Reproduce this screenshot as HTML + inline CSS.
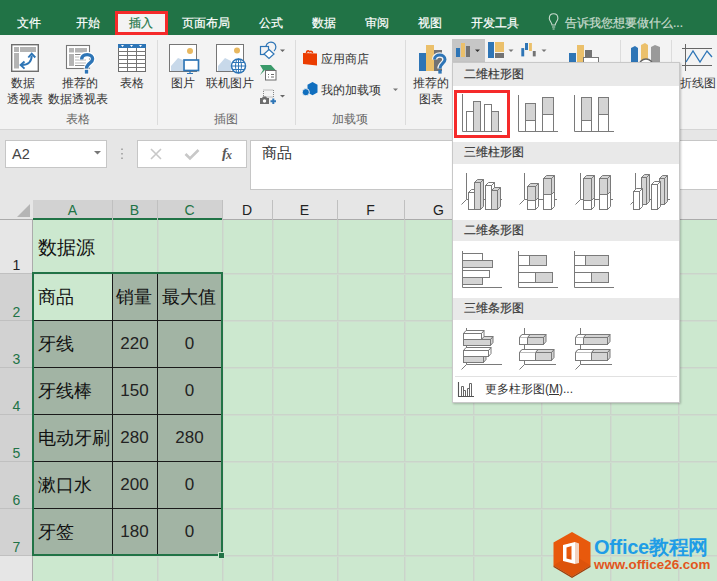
<!DOCTYPE html>
<html><head><meta charset="utf-8"><style>
*{margin:0;padding:0;box-sizing:border-box}
html,body{width:717px;height:581px;overflow:hidden;background:#cce8cf;font-family:"Liberation Sans",sans-serif;font-size:12px;color:#262626;position:relative}
.a{position:absolute;white-space:nowrap}
.tab{position:absolute;top:15px;color:#fff;font-size:12px;line-height:16px;white-space:nowrap;-webkit-text-stroke:0.2px currentColor}
.rl{position:absolute;font-size:12px;line-height:15px;color:#333;white-space:nowrap}
.gl{position:absolute;top:112px;font-size:12px;line-height:15px;color:#666;white-space:nowrap}
.hd{position:absolute;left:453px;width:226px;background:#e9e9e9}
.hdt{position:absolute;left:11px;font-size:12px;line-height:15px;color:#3a3a3a;white-space:nowrap;-webkit-text-stroke:0.2px #3a3a3a}
.ch{position:absolute;top:200px;height:20px;font-size:14px;line-height:21px;text-align:center;color:#222}
.rh{position:absolute;left:0;width:33px;font-size:14px;line-height:14px;text-align:center;color:#222}
.ct{position:absolute;font-size:19.2px;line-height:22px;color:#111;white-space:nowrap}
.cn{position:absolute;font-size:17px;line-height:22px;color:#222;text-align:center}
</style></head><body>
<div class="a" style="left:0;top:0;width:717px;height:35px;background:#217346"></div>
<div class="tab" style="left:17px">文件</div>
<div class="tab" style="left:76px">开始</div>
<div class="tab" style="left:182px">页面布局</div>
<div class="tab" style="left:259px">公式</div>
<div class="tab" style="left:312px">数据</div>
<div class="tab" style="left:365px">审阅</div>
<div class="tab" style="left:418px">视图</div>
<div class="tab" style="left:471px">开发工具</div>
<div class="a" style="left:115px;top:11px;width:53px;height:24px;background:#f3f3f3;border:3px solid #f52a2a"></div>
<div class="tab" style="left:129px;color:#217346">插入</div>
<div class="tab" style="left:565px;color:#c9dccf">告诉我您想要做什么...</div>
<div class="a" style="left:0;top:35px;width:717px;height:95px;background:#f3f3f3;border-bottom:1px solid #d5d5d5"></div>
<div class="a" style="left:0;top:130px;width:717px;height:70px;background:#e6e6e6"></div>
<div class="rl" style="left:11px;top:76px">数据</div>
<div class="rl" style="left:7px;top:92px">透视表</div>
<div class="rl" style="left:62px;top:76px">推荐的</div>
<div class="rl" style="left:48px;top:92px">数据透视表</div>
<div class="rl" style="left:120px;top:76px">表格</div>
<div class="rl" style="left:171px;top:76px">图片</div>
<div class="rl" style="left:206px;top:76px">联机图片</div>
<div class="rl" style="left:321px;top:52px">应用商店</div>
<div class="rl" style="left:321px;top:83px">我的加载项</div>
<div class="rl" style="left:413px;top:76px">推荐的</div>
<div class="rl" style="left:419px;top:92px">图表</div>
<div class="rl" style="left:680px;top:76px">折线图</div>
<div class="gl" style="left:66px">表格</div>
<div class="gl" style="left:214px">插图</div>
<div class="gl" style="left:332px">加载项</div>
<div class="a" style="left:157px;top:40px;width:1px;height:85px;background:#dcdcdc"></div>
<div class="a" style="left:295px;top:40px;width:1px;height:85px;background:#dcdcdc"></div>
<div class="a" style="left:405px;top:40px;width:1px;height:85px;background:#dcdcdc"></div>
<div class="a" style="left:620px;top:40px;width:1px;height:85px;background:#dcdcdc"></div>
<div class="a" style="left:671px;top:40px;width:1px;height:85px;background:#dcdcdc"></div>
<div class="a" style="left:452px;top:39px;width:33px;height:23px;background:#c6c6c6"></div>
<div class="a" style="left:5px;top:140px;width:102px;height:28px;background:#fff;border:1px solid #c6c6c6"></div>
<div class="a" style="left:12px;top:146px;font-size:14.5px;line-height:16px;color:#444">A2</div>
<div class="a" style="left:137px;top:140px;width:110px;height:28px;background:#fff;border:1px solid #c6c6c6"></div>
<div class="a" style="left:222px;top:145px;font-family:&quot;Liberation Serif&quot;,serif;font-style:italic;font-weight:bold;font-size:15px;line-height:16px;color:#5a5a5a;letter-spacing:-1px">f<span style="font-size:12px;position:relative;top:1px">x</span></div>
<div class="a" style="left:250px;top:140px;width:480px;height:50px;background:#fff;border:1px solid #c6c6c6"></div>
<div class="a" style="left:262px;top:144px;font-size:15px;line-height:18px;color:#333">商品</div>
<div class="a" style="left:112px;top:220px;width:1px;height:361px;background:#cad4ca"></div>
<div class="a" style="left:113px;top:220px;width:1px;height:361px;background:#ceddcf"></div>
<div class="a" style="left:157px;top:220px;width:1px;height:361px;background:#cad4ca"></div>
<div class="a" style="left:158px;top:220px;width:1px;height:361px;background:#ceddcf"></div>
<div class="a" style="left:222px;top:220px;width:1px;height:361px;background:#cad4ca"></div>
<div class="a" style="left:223px;top:220px;width:1px;height:361px;background:#ceddcf"></div>
<div class="a" style="left:272px;top:220px;width:1px;height:361px;background:#cad4ca"></div>
<div class="a" style="left:273px;top:220px;width:1px;height:361px;background:#ceddcf"></div>
<div class="a" style="left:337px;top:220px;width:1px;height:361px;background:#cad4ca"></div>
<div class="a" style="left:338px;top:220px;width:1px;height:361px;background:#ceddcf"></div>
<div class="a" style="left:404px;top:220px;width:1px;height:361px;background:#cad4ca"></div>
<div class="a" style="left:405px;top:220px;width:1px;height:361px;background:#ceddcf"></div>
<div class="a" style="left:473px;top:220px;width:1px;height:361px;background:#cad4ca"></div>
<div class="a" style="left:474px;top:220px;width:1px;height:361px;background:#ceddcf"></div>
<div class="a" style="left:541px;top:220px;width:1px;height:361px;background:#cad4ca"></div>
<div class="a" style="left:542px;top:220px;width:1px;height:361px;background:#ceddcf"></div>
<div class="a" style="left:610px;top:220px;width:1px;height:361px;background:#cad4ca"></div>
<div class="a" style="left:611px;top:220px;width:1px;height:361px;background:#ceddcf"></div>
<div class="a" style="left:678px;top:220px;width:1px;height:361px;background:#cad4ca"></div>
<div class="a" style="left:679px;top:220px;width:1px;height:361px;background:#ceddcf"></div>
<div class="a" style="left:746px;top:220px;width:1px;height:361px;background:#cad4ca"></div>
<div class="a" style="left:747px;top:220px;width:1px;height:361px;background:#ceddcf"></div>
<div class="a" style="left:33px;top:273px;width:700px;height:1px;background:#cad4ca"></div>
<div class="a" style="left:33px;top:274px;width:700px;height:1px;background:#ceddcf"></div>
<div class="a" style="left:33px;top:320px;width:700px;height:1px;background:#cad4ca"></div>
<div class="a" style="left:33px;top:321px;width:700px;height:1px;background:#ceddcf"></div>
<div class="a" style="left:33px;top:367px;width:700px;height:1px;background:#cad4ca"></div>
<div class="a" style="left:33px;top:368px;width:700px;height:1px;background:#ceddcf"></div>
<div class="a" style="left:33px;top:414px;width:700px;height:1px;background:#cad4ca"></div>
<div class="a" style="left:33px;top:415px;width:700px;height:1px;background:#ceddcf"></div>
<div class="a" style="left:33px;top:461px;width:700px;height:1px;background:#cad4ca"></div>
<div class="a" style="left:33px;top:462px;width:700px;height:1px;background:#ceddcf"></div>
<div class="a" style="left:33px;top:508px;width:700px;height:1px;background:#cad4ca"></div>
<div class="a" style="left:33px;top:509px;width:700px;height:1px;background:#ceddcf"></div>
<div class="a" style="left:33px;top:555px;width:700px;height:1px;background:#cad4ca"></div>
<div class="a" style="left:33px;top:556px;width:700px;height:1px;background:#ceddcf"></div>
<div class="a" style="left:33px;top:602px;width:700px;height:1px;background:#cad4ca"></div>
<div class="a" style="left:33px;top:603px;width:700px;height:1px;background:#ceddcf"></div>
<div class="a" style="left:112px;top:273px;width:110px;height:47px;background:#a2b4a4"></div>
<div class="a" style="left:33px;top:320px;width:189px;height:235px;background:#a2b4a4"></div>
<div class="a" style="left:33px;top:273px;width:1px;height:283px;background:#1a1a1a"></div>
<div class="a" style="left:112px;top:273px;width:1px;height:283px;background:#1a1a1a"></div>
<div class="a" style="left:157px;top:273px;width:1px;height:283px;background:#1a1a1a"></div>
<div class="a" style="left:221px;top:273px;width:1px;height:283px;background:#1a1a1a"></div>
<div class="a" style="left:33px;top:273px;width:189px;height:1px;background:#1a1a1a"></div>
<div class="a" style="left:33px;top:320px;width:189px;height:1px;background:#1a1a1a"></div>
<div class="a" style="left:33px;top:367px;width:189px;height:1px;background:#1a1a1a"></div>
<div class="a" style="left:33px;top:414px;width:189px;height:1px;background:#1a1a1a"></div>
<div class="a" style="left:33px;top:461px;width:189px;height:1px;background:#1a1a1a"></div>
<div class="a" style="left:33px;top:508px;width:189px;height:1px;background:#1a1a1a"></div>
<div class="a" style="left:33px;top:555px;width:189px;height:1px;background:#1a1a1a"></div>
<div class="a" style="left:0;top:200px;width:717px;height:20px;background:#e6e6e6;border-bottom:1px solid #ababab"></div>
<div class="a" style="left:33px;top:200px;width:189px;height:20px;background:#d2d2d2;border-bottom:2px solid #217346"></div>
<div class="a" style="left:112px;top:200px;width:1px;height:20px;background:#c0c0c0"></div>
<div class="a" style="left:157px;top:200px;width:1px;height:20px;background:#c0c0c0"></div>
<div class="a" style="left:222px;top:200px;width:1px;height:20px;background:#c0c0c0"></div>
<div class="a" style="left:272px;top:200px;width:1px;height:20px;background:#c0c0c0"></div>
<div class="a" style="left:337px;top:200px;width:1px;height:20px;background:#c0c0c0"></div>
<div class="a" style="left:404px;top:200px;width:1px;height:20px;background:#c0c0c0"></div>
<div class="a" style="left:473px;top:200px;width:1px;height:20px;background:#c0c0c0"></div>
<div class="a" style="left:541px;top:200px;width:1px;height:20px;background:#c0c0c0"></div>
<div class="a" style="left:610px;top:200px;width:1px;height:20px;background:#c0c0c0"></div>
<div class="a" style="left:678px;top:200px;width:1px;height:20px;background:#c0c0c0"></div>
<div class="a" style="left:746px;top:200px;width:1px;height:20px;background:#c0c0c0"></div>
<div class="ch" style="left:33px;width:79px;color:#217346">A</div>
<div class="ch" style="left:112px;width:45px;color:#217346">B</div>
<div class="ch" style="left:157px;width:65px;color:#217346">C</div>
<div class="ch" style="left:222px;width:50px;color:#222">D</div>
<div class="ch" style="left:272px;width:65px;color:#222">E</div>
<div class="ch" style="left:337px;width:67px;color:#222">F</div>
<div class="ch" style="left:404px;width:69px;color:#222">G</div>
<div class="ch" style="left:473px;width:68px;color:#222">H</div>
<div class="ch" style="left:541px;width:69px;color:#222">I</div>
<div class="ch" style="left:610px;width:68px;color:#222">J</div>
<div class="a" style="left:0;top:220px;width:33px;height:361px;background:#e6e6e6;border-right:1px solid #ababab"></div>
<div class="a" style="left:0;top:273px;width:33px;height:282px;background:#d2d2d2;border-right:1px solid #ababab"></div>
<div class="a" style="left:0;top:273px;width:33px;height:1px;background:#c0c0c0"></div>
<div class="a" style="left:0;top:320px;width:33px;height:1px;background:#c0c0c0"></div>
<div class="a" style="left:0;top:367px;width:33px;height:1px;background:#c0c0c0"></div>
<div class="a" style="left:0;top:414px;width:33px;height:1px;background:#c0c0c0"></div>
<div class="a" style="left:0;top:461px;width:33px;height:1px;background:#c0c0c0"></div>
<div class="a" style="left:0;top:508px;width:33px;height:1px;background:#c0c0c0"></div>
<div class="a" style="left:0;top:555px;width:33px;height:1px;background:#c0c0c0"></div>
<div class="a" style="left:0;top:602px;width:33px;height:1px;background:#c0c0c0"></div>
<div class="rh" style="top:258px;color:#222">1</div>
<div class="rh" style="top:305px;color:#217346">2</div>
<div class="rh" style="top:352px;color:#217346">3</div>
<div class="rh" style="top:399px;color:#217346">4</div>
<div class="rh" style="top:446px;color:#217346">5</div>
<div class="rh" style="top:493px;color:#217346">6</div>
<div class="rh" style="top:540px;color:#217346">7</div>
<div class="a" style="left:32px;top:272px;width:191px;height:284px;border:2px solid #217346"></div>
<div class="a" style="left:219px;top:553px;width:5px;height:5px;background:#217346;outline:1px solid #cce8cf"></div>
<svg class="a" style="left:0;top:200px" width="33" height="20"><path d="M30 4 L30 17 L17 17 Z" fill="#b5b5b5"/></svg>
<div class="ct" style="left:38px;top:237px">数据源</div>
<div class="ct" style="left:38px;top:286px;font-size:17.5px">商品</div>
<div class="ct" style="left:116px;top:286px;font-size:17.5px">销量</div>
<div class="ct" style="left:162px;top:286px;font-size:17.5px">最大值</div>
<div class="ct" style="left:38px;top:333px;font-size:17.5px">牙线</div>
<div class="cn" style="left:112px;width:45px;top:333px">220</div>
<div class="cn" style="left:157px;width:65px;top:333px">0</div>
<div class="ct" style="left:38px;top:380px;font-size:17.5px">牙线棒</div>
<div class="cn" style="left:112px;width:45px;top:380px">150</div>
<div class="cn" style="left:157px;width:65px;top:380px">0</div>
<div class="ct" style="left:38px;top:427px;font-size:17.5px">电动牙刷</div>
<div class="cn" style="left:112px;width:45px;top:427px">280</div>
<div class="cn" style="left:157px;width:65px;top:427px">280</div>
<div class="ct" style="left:38px;top:474px;font-size:17.5px">漱口水</div>
<div class="cn" style="left:112px;width:45px;top:474px">200</div>
<div class="cn" style="left:157px;width:65px;top:474px">0</div>
<div class="ct" style="left:38px;top:521px;font-size:17.5px">牙签</div>
<div class="cn" style="left:112px;width:45px;top:521px">180</div>
<div class="cn" style="left:157px;width:65px;top:521px">0</div>
<svg class="a" style="left:0;top:0" width="717" height="581"><rect x="11.7" y="44.7" width="26.6" height="26.6" fill="#fff" stroke="#6e6e6e" stroke-width="1.4"/><rect x="20" y="47" width="16" height="5" fill="#b4b4b4"/><rect x="14" y="47" width="5" height="5" fill="#b4b4b4"/><rect x="14" y="53" width="5" height="15.5" fill="#b4b4b4"/><path d="M31.7 55.5 C31.7 61.5 28 65 22 65" fill="none" stroke="#2e75b6" stroke-width="2"/><path d="M28.3 57.5 L31.7 53.6 L35.3 57.5" fill="none" stroke="#2e75b6" stroke-width="1.9"/><path d="M24.5 61.5 L20.6 65 L24.5 68.6" fill="none" stroke="#2e75b6" stroke-width="1.9"/><rect x="66.5" y="45.5" width="23" height="23" fill="#fff" stroke="#777" stroke-width="1.1"/><rect x="69" y="48" width="5" height="4.5" fill="#b4b4b4"/><rect x="75" y="48" width="12" height="4.5" fill="#b4b4b4"/><rect x="69" y="54" width="5" height="12" fill="#b4b4b4"/><path d="M75 54.5 H87 M75 65.5 H87" stroke="#888" stroke-width="1"/><path d="M75 57 H86 M75 60 H86 M75 63 H86" stroke="#d0d0d0" stroke-width="1.6"/><path d="M81.7 59.6 C81.7 56 84 54.6 87.2 54.6 C90.8 54.6 92.6 56.6 92.6 59 C92.6 61.8 90 62.8 88.6 64.2 C87.2 65.6 86.5 66.5 86.5 68.6" fill="none" stroke="#fff" stroke-width="5.6"/><rect x="83.8" y="68.6" width="5.4" height="6" fill="#fff"/><path d="M81.7 59.6 C81.7 56 84 54.6 87.2 54.6 C90.8 54.6 92.6 56.6 92.6 59 C92.6 61.8 90 62.8 88.6 64.2 C87.2 65.6 86.5 66.5 86.5 68.6" fill="none" stroke="#2e75b6" stroke-width="3.4"/><rect x="84.8" y="69.8" width="3.4" height="3.8" fill="#2e75b6"/><rect x="118.5" y="44.5" width="27" height="27" fill="#fff" stroke="#6d6d6d" stroke-width="1"/><rect x="118" y="44" width="28" height="4" fill="#2e75b6"/><path d="M121 45 h3 l-1.5 2z M130 45 h3 l-1.5 2z M139 45 h3 l-1.5 2z" fill="#fff"/><path d="M127.5 48 V71 M136.5 48 V71 M118 51.5 H146 M118 55.5 H146 M118 59.5 H146 M118 63.5 H146 M118 67.5 H146" stroke="#767676" stroke-width="1"/><rect x="169.5" y="44.5" width="27" height="27" fill="#fff" stroke="#767676" stroke-width="1"/><circle cx="190" cy="51" r="3" fill="#e8b860"/><path d="M171 71 V66 L178 58 L183 60 V71 Z" fill="#c8d9ea"/><rect x="184" y="60" width="14.5" height="10.5" fill="#fff" stroke="#2e75b6" stroke-width="1.7"/><path d="M190 71 V73 M187 73.5 H193" stroke="#2e75b6" stroke-width="1.2"/><rect x="216.5" y="44.5" width="27" height="27" fill="#fff" stroke="#767676" stroke-width="1"/><circle cx="237" cy="50.5" r="3" fill="#e8b860"/><path d="M218 71 V66 L225 58 L231 61 V71 Z" fill="#c8d9ea"/><circle cx="238.5" cy="66" r="7" fill="#fff" stroke="#2e75b6" stroke-width="1.5"/><path d="M231.5 66 H245.5 M232.5 62.5 H244.5 M232.5 69.5 H244.5 M238.5 59 V73" stroke="#2e75b6" stroke-width="1"/><ellipse cx="238.5" cy="66" rx="3" ry="7" fill="none" stroke="#2e75b6" stroke-width="1"/><rect x="260.5" y="46.5" width="8" height="8" fill="none" stroke="#2e75b6" stroke-width="1.2"/><path d="M266 46 A5 5 0 1 1 274 51" fill="none" stroke="#2e75b6" stroke-width="1.2"/><path d="M269 49.5 L274 54 L269 58.5 L264 54 Z" fill="#fff" stroke="#2e75b6" stroke-width="1.2"/><path d="M280 49.5 h5 l-2.5 2.5z" fill="#666"/><path d="M260 65 H271 L275.5 70 H265 L260 75 L263 70 Z" fill="#3a9a6a"/><rect x="265.5" y="70.5" width="10.5" height="9.5" fill="#fff" stroke="#6d6d6d" stroke-width="1"/><path d="M268 74.5 h1 M271 74.5 h3 M268 77 h1 M271 77 h3" stroke="#6d6d6d" stroke-width="1"/><rect x="263.5" y="90" width="10" height="7" fill="none" stroke="#888" stroke-width="1" stroke-dasharray="1,1"/><path d="M260 98 H262 L263 96.5 H266 L267 98 H269 V104 H260 Z" fill="#6d6d6d"/><circle cx="264.5" cy="101" r="1.7" fill="#fff"/><path d="M273.3 98.5 V104 M270.5 101.2 H276" stroke="#2e75b6" stroke-width="2"/><path d="M280 95 h5 l-2.5 2.5z" fill="#666"/><path d="M303 53 L317 53.5 L317 65.5 L303 64 Z" fill="#eb3c00"/><path d="M306.5 53 C306.5 50.3 309.5 50.3 309.5 52.5 C309.5 50.8 312.5 50.8 312.5 53" fill="none" stroke="#eb3c00" stroke-width="1.6"/><path d="M312.5 82 L317.5 84.8 V92.5 L312.5 95.3 L307.5 92.5 V84.8 Z" fill="#106ebe"/><circle cx="305.8" cy="92.2" r="3.6" fill="#106ebe" stroke="#f3f3f3" stroke-width="0.9"/><path d="M393 88.5 h5 l-2.5 2.5z" fill="#777"/><rect x="419" y="53" width="7" height="18" fill="#2e75b6"/><rect x="426" y="45" width="8" height="26" fill="#ebc06b"/><rect x="434" y="50" width="8" height="21" fill="#737373"/><path d="M434.5 59.5 C434.5 53.5 445 53.5 445 59.5 C445 63.5 440 63.5 440 68.5" fill="none" stroke="#f3f3f3" stroke-width="5.5"/><path d="M434.5 59.5 C434.5 53.5 445 53.5 445 59.5 C445 63.5 440 63.5 440 68.5" fill="none" stroke="#2e75b6" stroke-width="3"/><rect x="438.3" y="70" width="3.4" height="3.6" fill="#2e75b6"/><rect x="456" y="48" width="4" height="9" fill="#2e75b6"/><rect x="461" y="43" width="4" height="14" fill="#ebc06b"/><rect x="466" y="46" width="4" height="11" fill="#737373"/><path d="M475 49.5 h5 l-2.5 2.5z" fill="#333"/><rect x="488" y="42" width="6" height="16" fill="#2e75b6"/><rect x="495" y="42" width="9" height="10" fill="#ebc06b"/><rect x="495" y="53" width="9" height="5" fill="#737373"/><path d="M508.5 49.5 h5 l-2.5 2.5z" fill="#777"/><rect x="521.3" y="48.1" width="2.9" height="8.3" fill="#2e75b6"/><rect x="525" y="43" width="3" height="7" fill="#2e75b6"/><rect x="529" y="43" width="2.9" height="8" fill="#ebc06b"/><rect x="532.8" y="51" width="2.9" height="5.4" fill="#737373"/><path d="M541.5 49.5 h5 l-2.5 2.5z" fill="#777"/><rect x="569" y="53" width="7" height="10" fill="#2e75b6"/><rect x="577" y="45" width="7" height="18" fill="#ebc06b"/><rect x="585" y="50" width="7" height="13" fill="#737373"/><rect x="583.5" y="57.5" width="15" height="6" fill="#fff" stroke="#777" stroke-width="1"/><path d="M631 48 L635 46 L638 48 V63 H631 Z" fill="#2e75b6"/><path d="M641 45 L645 43 L648 45 V63 H641 Z" fill="#ebc06b"/><path d="M651 47 L655 45 L660 47 V63 H651 Z" fill="#9a9a9a"/><circle cx="646" cy="66" r="7" fill="#fff" stroke="#666" stroke-width="1.5"/><path d="M685.5 44 V71 M682 48.5 H712 M682 65.5 H712" stroke="#666" stroke-width="1"/><path d="M686 62 L693 51 L700 62 L707 51 L712 57" fill="none" stroke="#2e75b6" stroke-width="1.3"/></svg>
<svg class="a" style="left:0;top:0" width="717" height="581"><path d="M552 25 C552 22.5 549.3 21 549.3 18.5 C549.3 15.5 551.3 13.8 553.6 13.8 C555.9 13.8 557.9 15.5 557.9 18.5 C557.9 21 555.2 22.5 555.2 25 Z" fill="none" stroke="#c9dccf" stroke-width="1.1"/><path d="M552 27 H555.2 M552.6 29 H554.6" stroke="#c9dccf" stroke-width="1.1"/><path d="M94 151 h7 l-3.5 3.5z" fill="#777"/><path d="M122 148.5 v1.5 M122 153 v1.5 M122 157.5 v1.5" stroke="#999" stroke-width="1.5"/><path d="M151 149 L161 159 M161 149 L151 159" stroke="#c8c8c8" stroke-width="1.6"/><path d="M185.5 154 L190 158.5 L198.5 150" fill="none" stroke="#c8c8c8" stroke-width="2.6"/><path d="M572 532 L590.5 542.5 V565.5 L572 576.5 L553.5 565.5 V542.5 Z" fill="#e8590c"/><path d="M572 554 L590.5 565.5 L572 576.5 L553.5 565.5 Z" fill="#d24e0a" opacity="0.5"/><path d="M553.5 565.5 L572 576.5 L590.5 565.5 V567 L572 578 L553.5 567 Z" fill="#a23c08"/><path d="M563 545 L575 542 V564 L563 561 Z M566.5 547.5 V558.5 L571.5 559.8 V546 Z" fill="#fff" fill-rule="evenodd"/><path d="M575 542 L579 543.5 V563 L575 564 Z" fill="#f3d2bf"/></svg>
<div class="a" style="left:452px;top:62px;width:228px;height:341px;background:#fff;border:1px solid #c8c8c8;box-shadow:1px 1px 2px rgba(0,0,0,0.22)"></div>
<div class="hd" style="top:63px;height:23px"><div class="hdt" style="top:4px">二维柱形图</div></div>
<div class="hd" style="top:142px;height:22px"><div class="hdt" style="top:3px">三维柱形图</div></div>
<div class="hd" style="top:220px;height:21px"><div class="hdt" style="top:3px">二维条形图</div></div>
<div class="hd" style="top:298px;height:22px"><div class="hdt" style="top:3px">三维条形图</div></div>
<div class="a" style="left:455px;top:376px;width:222px;height:1px;background:#e1e1e1"></div>
<div class="a" style="left:485px;top:382px;font-size:12px;line-height:15px;color:#333">更多柱形图(<u>M</u>)...</div>
<div class="a" style="left:454px;top:90px;width:56px;height:48px;border:3px solid #f52a2a"></div>
<svg class="a" style="left:0;top:0" width="717" height="581"><path d="M462.5 94 V131.5 H502" fill="none" stroke="#7a7a7a" stroke-width="1"/><rect x="466.5" y="111.5" width="7" height="20" fill="#fff" stroke="#7a7a7a" stroke-width="1"/><rect x="473.5" y="101.5" width="7" height="30" fill="#d4d4d4" stroke="#7a7a7a" stroke-width="1"/><rect x="484.5" y="104.5" width="7" height="27" fill="#fff" stroke="#7a7a7a" stroke-width="1"/><rect x="491.5" y="111.5" width="7" height="20" fill="#d4d4d4" stroke="#7a7a7a" stroke-width="1"/><path d="M518.5 95 V131.5 H558" fill="none" stroke="#7a7a7a" stroke-width="1"/><rect x="525.5" y="103.5" width="10" height="17" fill="#d4d4d4" stroke="#7a7a7a" stroke-width="1"/><rect x="525.5" y="120.5" width="10" height="11" fill="#fff" stroke="#7a7a7a" stroke-width="1"/><rect x="542.5" y="97.5" width="11" height="17" fill="#d4d4d4" stroke="#7a7a7a" stroke-width="1"/><rect x="542.5" y="114.5" width="11" height="17" fill="#fff" stroke="#7a7a7a" stroke-width="1"/><path d="M574.5 95 V131.5 H614" fill="none" stroke="#7a7a7a" stroke-width="1"/><rect x="581.5" y="97.5" width="10" height="23" fill="#d4d4d4" stroke="#7a7a7a" stroke-width="1"/><rect x="581.5" y="120.5" width="10" height="11" fill="#fff" stroke="#7a7a7a" stroke-width="1"/><rect x="598.5" y="97.5" width="10" height="17" fill="#d4d4d4" stroke="#7a7a7a" stroke-width="1"/><rect x="598.5" y="114.5" width="10" height="17" fill="#fff" stroke="#7a7a7a" stroke-width="1"/><path d="M462.5 251 V287.5 H502" fill="none" stroke="#7a7a7a" stroke-width="1"/><rect x="462.5" y="253.5" width="20" height="7" fill="#fff" stroke="#7a7a7a" stroke-width="1"/><rect x="462.5" y="260.5" width="30" height="7" fill="#d4d4d4" stroke="#7a7a7a" stroke-width="1"/><rect x="462.5" y="270.5" width="27" height="7" fill="#fff" stroke="#7a7a7a" stroke-width="1"/><rect x="462.5" y="277.5" width="20" height="7" fill="#d4d4d4" stroke="#7a7a7a" stroke-width="1"/><path d="M518.5 251 V287.5 H558" fill="none" stroke="#7a7a7a" stroke-width="1"/><rect x="518.5" y="255.5" width="11" height="10" fill="#fff" stroke="#7a7a7a" stroke-width="1"/><rect x="529.5" y="255.5" width="17" height="10" fill="#d4d4d4" stroke="#7a7a7a" stroke-width="1"/><rect x="518.5" y="272.5" width="17" height="10" fill="#fff" stroke="#7a7a7a" stroke-width="1"/><rect x="535.5" y="272.5" width="17" height="10" fill="#d4d4d4" stroke="#7a7a7a" stroke-width="1"/><path d="M574.5 251 V287.5 H614" fill="none" stroke="#7a7a7a" stroke-width="1"/><rect x="574.5" y="255.5" width="11" height="10" fill="#fff" stroke="#7a7a7a" stroke-width="1"/><rect x="585.5" y="255.5" width="23" height="10" fill="#d4d4d4" stroke="#7a7a7a" stroke-width="1"/><rect x="574.5" y="272.5" width="17" height="10" fill="#fff" stroke="#7a7a7a" stroke-width="1"/><rect x="591.5" y="272.5" width="17" height="10" fill="#d4d4d4" stroke="#7a7a7a" stroke-width="1"/><path d="M466.5 173 V199.5 H502 M466.5 199.5 L461.5 204.5" fill="none" stroke="#7a7a7a" stroke-width="1"/><path d="M474.5 209.5 L477.5 206.5 V189.5 L474.5 192.5 Z" fill="#fff" stroke="#7a7a7a" stroke-width="1" stroke-linejoin="round"/><path d="M468.5 192.5 L471.5 189.5 H477.5 L474.5 192.5 Z" fill="#fff" stroke="#7a7a7a" stroke-width="1" stroke-linejoin="round"/><rect x="468.5" y="192.5" width="6" height="17" fill="#fff" stroke="#7a7a7a" stroke-width="1"/><path d="M480.5 209.5 L483.5 206.5 V179.5 L480.5 182.5 Z" fill="#d4d4d4" stroke="#7a7a7a" stroke-width="1" stroke-linejoin="round"/><path d="M474.5 182.5 L477.5 179.5 H483.5 L480.5 182.5 Z" fill="#d4d4d4" stroke="#7a7a7a" stroke-width="1" stroke-linejoin="round"/><rect x="474.5" y="182.5" width="6" height="27" fill="#d4d4d4" stroke="#7a7a7a" stroke-width="1"/><path d="M491.5 209.5 L494.5 206.5 V182.5 L491.5 185.5 Z" fill="#fff" stroke="#7a7a7a" stroke-width="1" stroke-linejoin="round"/><path d="M485.5 185.5 L488.5 182.5 H494.5 L491.5 185.5 Z" fill="#fff" stroke="#7a7a7a" stroke-width="1" stroke-linejoin="round"/><rect x="485.5" y="185.5" width="6" height="24" fill="#fff" stroke="#7a7a7a" stroke-width="1"/><path d="M497.5 209.5 L500.5 206.5 V187.5 L497.5 190.5 Z" fill="#d4d4d4" stroke="#7a7a7a" stroke-width="1" stroke-linejoin="round"/><path d="M491.5 190.5 L494.5 187.5 H500.5 L497.5 190.5 Z" fill="#d4d4d4" stroke="#7a7a7a" stroke-width="1" stroke-linejoin="round"/><rect x="491.5" y="190.5" width="6" height="19" fill="#d4d4d4" stroke="#7a7a7a" stroke-width="1"/><path d="M524.5 173 V199.5 H557 M524.5 199.5 L519.5 204.5" fill="none" stroke="#7a7a7a" stroke-width="1"/><path d="M535.5 200.5 L538.5 197.5 V183.5 L535.5 186.5 Z" fill="#d4d4d4" stroke="#7a7a7a" stroke-width="1" stroke-linejoin="round"/><path d="M527.5 186.5 L530.5 183.5 H538.5 L535.5 186.5 Z" fill="#d4d4d4" stroke="#7a7a7a" stroke-width="1" stroke-linejoin="round"/><rect x="527.5" y="186.5" width="8" height="14" fill="#d4d4d4" stroke="#7a7a7a" stroke-width="1"/><path d="M535.5 209.5 L538.5 206.5 V197.5 L535.5 200.5 Z" fill="#fff" stroke="#7a7a7a" stroke-width="1" stroke-linejoin="round"/><rect x="527.5" y="200.5" width="8" height="9" fill="#fff" stroke="#7a7a7a" stroke-width="1"/><path d="M551.5 194.5 L554.5 191.5 V175.5 L551.5 178.5 Z" fill="#d4d4d4" stroke="#7a7a7a" stroke-width="1" stroke-linejoin="round"/><path d="M543.5 178.5 L546.5 175.5 H554.5 L551.5 178.5 Z" fill="#d4d4d4" stroke="#7a7a7a" stroke-width="1" stroke-linejoin="round"/><rect x="543.5" y="178.5" width="8" height="16" fill="#d4d4d4" stroke="#7a7a7a" stroke-width="1"/><path d="M551.5 209.5 L554.5 206.5 V191.5 L551.5 194.5 Z" fill="#fff" stroke="#7a7a7a" stroke-width="1" stroke-linejoin="round"/><rect x="543.5" y="194.5" width="8" height="15" fill="#fff" stroke="#7a7a7a" stroke-width="1"/><path d="M580.5 173 V199.5 H613 M580.5 199.5 L575.5 204.5" fill="none" stroke="#7a7a7a" stroke-width="1"/><path d="M591.5 200.5 L594.5 197.5 V175.5 L591.5 178.5 Z" fill="#d4d4d4" stroke="#7a7a7a" stroke-width="1" stroke-linejoin="round"/><path d="M583.5 178.5 L586.5 175.5 H594.5 L591.5 178.5 Z" fill="#d4d4d4" stroke="#7a7a7a" stroke-width="1" stroke-linejoin="round"/><rect x="583.5" y="178.5" width="8" height="22" fill="#d4d4d4" stroke="#7a7a7a" stroke-width="1"/><path d="M591.5 209.5 L594.5 206.5 V197.5 L591.5 200.5 Z" fill="#fff" stroke="#7a7a7a" stroke-width="1" stroke-linejoin="round"/><rect x="583.5" y="200.5" width="8" height="9" fill="#fff" stroke="#7a7a7a" stroke-width="1"/><path d="M607.5 194.5 L610.5 191.5 V175.5 L607.5 178.5 Z" fill="#d4d4d4" stroke="#7a7a7a" stroke-width="1" stroke-linejoin="round"/><path d="M599.5 178.5 L602.5 175.5 H610.5 L607.5 178.5 Z" fill="#d4d4d4" stroke="#7a7a7a" stroke-width="1" stroke-linejoin="round"/><rect x="599.5" y="178.5" width="8" height="16" fill="#d4d4d4" stroke="#7a7a7a" stroke-width="1"/><path d="M607.5 209.5 L610.5 206.5 V191.5 L607.5 194.5 Z" fill="#fff" stroke="#7a7a7a" stroke-width="1" stroke-linejoin="round"/><rect x="599.5" y="194.5" width="8" height="15" fill="#fff" stroke="#7a7a7a" stroke-width="1"/><path d="M635.5 173 V199.5 H670 M635.5 199.5 L630.5 204.5" fill="none" stroke="#7a7a7a" stroke-width="1"/><path d="M646.5 204.5 L649.5 201.5 V174.5 L646.5 177.5 Z" fill="#d4d4d4" stroke="#7a7a7a" stroke-width="1" stroke-linejoin="round"/><path d="M641.5 177.5 L644.5 174.5 H649.5 L646.5 177.5 Z" fill="#d4d4d4" stroke="#7a7a7a" stroke-width="1" stroke-linejoin="round"/><rect x="641.5" y="177.5" width="5" height="27" fill="#d4d4d4" stroke="#7a7a7a" stroke-width="1"/><path d="M664.5 204.5 L667.5 201.5 V175.5 L664.5 178.5 Z" fill="#d4d4d4" stroke="#7a7a7a" stroke-width="1" stroke-linejoin="round"/><path d="M659.5 178.5 L662.5 175.5 H667.5 L664.5 178.5 Z" fill="#d4d4d4" stroke="#7a7a7a" stroke-width="1" stroke-linejoin="round"/><rect x="659.5" y="178.5" width="5" height="26" fill="#d4d4d4" stroke="#7a7a7a" stroke-width="1"/><path d="M639.5 209.5 L642.5 206.5 V188.5 L639.5 191.5 Z" fill="#fff" stroke="#7a7a7a" stroke-width="1" stroke-linejoin="round"/><path d="M633.5 191.5 L636.5 188.5 H642.5 L639.5 191.5 Z" fill="#fff" stroke="#7a7a7a" stroke-width="1" stroke-linejoin="round"/><rect x="633.5" y="191.5" width="6" height="18" fill="#fff" stroke="#7a7a7a" stroke-width="1"/><path d="M657.5 209.5 L660.5 206.5 V181.5 L657.5 184.5 Z" fill="#fff" stroke="#7a7a7a" stroke-width="1" stroke-linejoin="round"/><path d="M651.5 184.5 L654.5 181.5 H660.5 L657.5 184.5 Z" fill="#fff" stroke="#7a7a7a" stroke-width="1" stroke-linejoin="round"/><rect x="651.5" y="184.5" width="6" height="25" fill="#fff" stroke="#7a7a7a" stroke-width="1"/><path d="M466.5 328 V364.5 H502 M466.5 364.5 L461.5 369.5" fill="none" stroke="#7a7a7a" stroke-width="1"/><path d="M490.5 345.5 L493.0 342.5 V336.5 L490.5 339.5 Z" fill="#d4d4d4" stroke="#7a7a7a" stroke-width="1" stroke-linejoin="round"/><path d="M463.5 339.5 L466.0 336.5 H493.0 L490.5 339.5 Z" fill="#d4d4d4" stroke="#7a7a7a" stroke-width="1" stroke-linejoin="round"/><rect x="463.5" y="339.5" width="27" height="6" fill="#d4d4d4" stroke="#7a7a7a" stroke-width="1"/><path d="M481.5 339.5 L484.0 336.5 V330.5 L481.5 333.5 Z" fill="#fff" stroke="#7a7a7a" stroke-width="1" stroke-linejoin="round"/><path d="M463.5 333.5 L466.0 330.5 H484.0 L481.5 333.5 Z" fill="#fff" stroke="#7a7a7a" stroke-width="1" stroke-linejoin="round"/><rect x="463.5" y="333.5" width="18" height="6" fill="#fff" stroke="#7a7a7a" stroke-width="1"/><path d="M483.5 362.5 L486.0 359.5 V353.5 L483.5 356.5 Z" fill="#d4d4d4" stroke="#7a7a7a" stroke-width="1" stroke-linejoin="round"/><path d="M463.5 356.5 L466.0 353.5 H486.0 L483.5 356.5 Z" fill="#d4d4d4" stroke="#7a7a7a" stroke-width="1" stroke-linejoin="round"/><rect x="463.5" y="356.5" width="20" height="6" fill="#d4d4d4" stroke="#7a7a7a" stroke-width="1"/><path d="M488.5 356.5 L491.0 353.5 V347.5 L488.5 350.5 Z" fill="#fff" stroke="#7a7a7a" stroke-width="1" stroke-linejoin="round"/><path d="M463.5 350.5 L466.0 347.5 H491.0 L488.5 350.5 Z" fill="#fff" stroke="#7a7a7a" stroke-width="1" stroke-linejoin="round"/><rect x="463.5" y="350.5" width="25" height="6" fill="#fff" stroke="#7a7a7a" stroke-width="1"/><path d="M524.5 328 V364.5 H556 M524.5 364.5 L519.5 369.5" fill="none" stroke="#7a7a7a" stroke-width="1"/><path d="M519.5 337.5 L522.0 334.5 H530.0 L527.5 337.5 Z" fill="#fff" stroke="#7a7a7a" stroke-width="1" stroke-linejoin="round"/><rect x="519.5" y="337.5" width="8" height="7" fill="#fff" stroke="#7a7a7a" stroke-width="1"/><path d="M543.5 344.5 L546.0 341.5 V334.5 L543.5 337.5 Z" fill="#d4d4d4" stroke="#7a7a7a" stroke-width="1" stroke-linejoin="round"/><path d="M527.5 337.5 L530.0 334.5 H546.0 L543.5 337.5 Z" fill="#d4d4d4" stroke="#7a7a7a" stroke-width="1" stroke-linejoin="round"/><rect x="527.5" y="337.5" width="16" height="7" fill="#d4d4d4" stroke="#7a7a7a" stroke-width="1"/><path d="M519.5 337.5 L522 334.5 H530 L527.5 337.5" fill="#fff" stroke="#7a7a7a" stroke-width="1"/><path d="M519.5 352.5 L522.0 349.5 H538.0 L535.5 352.5 Z" fill="#fff" stroke="#7a7a7a" stroke-width="1" stroke-linejoin="round"/><rect x="519.5" y="352.5" width="16" height="8" fill="#fff" stroke="#7a7a7a" stroke-width="1"/><path d="M551.5 360.5 L554.0 357.5 V349.5 L551.5 352.5 Z" fill="#d4d4d4" stroke="#7a7a7a" stroke-width="1" stroke-linejoin="round"/><path d="M535.5 352.5 L538.0 349.5 H554.0 L551.5 352.5 Z" fill="#d4d4d4" stroke="#7a7a7a" stroke-width="1" stroke-linejoin="round"/><rect x="535.5" y="352.5" width="16" height="8" fill="#d4d4d4" stroke="#7a7a7a" stroke-width="1"/><path d="M519.5 352.5 L522 349.5 H538 L535.5 352.5" fill="#fff" stroke="#7a7a7a" stroke-width="1"/><path d="M580.5 328 V364.5 H612 M580.5 364.5 L575.5 369.5" fill="none" stroke="#7a7a7a" stroke-width="1"/><path d="M575.5 337.5 L578.0 334.5 H586.0 L583.5 337.5 Z" fill="#fff" stroke="#7a7a7a" stroke-width="1" stroke-linejoin="round"/><rect x="575.5" y="337.5" width="8" height="7" fill="#fff" stroke="#7a7a7a" stroke-width="1"/><path d="M607.5 344.5 L610.0 341.5 V334.5 L607.5 337.5 Z" fill="#d4d4d4" stroke="#7a7a7a" stroke-width="1" stroke-linejoin="round"/><path d="M583.5 337.5 L586.0 334.5 H610.0 L607.5 337.5 Z" fill="#d4d4d4" stroke="#7a7a7a" stroke-width="1" stroke-linejoin="round"/><rect x="583.5" y="337.5" width="24" height="7" fill="#d4d4d4" stroke="#7a7a7a" stroke-width="1"/><path d="M575.5 337.5 L578 334.5 H586 L583.5 337.5" fill="#fff" stroke="#7a7a7a" stroke-width="1"/><path d="M575.5 352.5 L578.0 349.5 H594.0 L591.5 352.5 Z" fill="#fff" stroke="#7a7a7a" stroke-width="1" stroke-linejoin="round"/><rect x="575.5" y="352.5" width="16" height="8" fill="#fff" stroke="#7a7a7a" stroke-width="1"/><path d="M607.5 360.5 L610.0 357.5 V349.5 L607.5 352.5 Z" fill="#d4d4d4" stroke="#7a7a7a" stroke-width="1" stroke-linejoin="round"/><path d="M591.5 352.5 L594.0 349.5 H610.0 L607.5 352.5 Z" fill="#d4d4d4" stroke="#7a7a7a" stroke-width="1" stroke-linejoin="round"/><rect x="591.5" y="352.5" width="16" height="8" fill="#d4d4d4" stroke="#7a7a7a" stroke-width="1"/><path d="M575.5 352.5 L578 349.5 H594 L591.5 352.5" fill="#fff" stroke="#7a7a7a" stroke-width="1"/><path d="M458.5 382 V396.5 H474" fill="none" stroke="#555" stroke-width="1.1"/><path d="M461.5 396 V386.5 H463.5 V396 M463.5 396 V390.5 H465.5 V396 M467.5 396 V388.5 H469.5 V396 M469.5 396 V383.5 H471.5 V396" fill="none" stroke="#666" stroke-width="1"/></svg>
<div class="a" style="left:594px;top:536px;font-size:20px;line-height:22px;font-weight:bold;color:#1f9de6;letter-spacing:-0.3px">Office教程网</div>
<div class="a" style="left:594px;top:558px;font-size:13.4px;line-height:14px;font-weight:bold;color:#e2561d">www.office26.com</div>
</body></html>
